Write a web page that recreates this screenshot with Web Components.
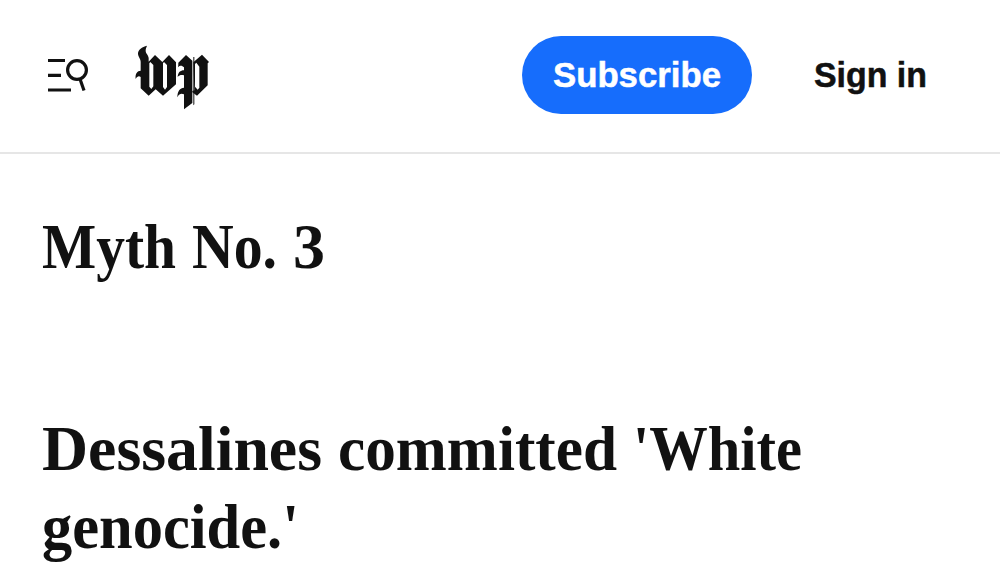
<!DOCTYPE html>
<html lang="en">
<head>
<meta charset="utf-8">
<title>Myth No. 3</title>
<style>
  body {
    margin: 0;
    background: #fff;
    color: #111;
    overflow: hidden;
  }
</style>
</head>
<body>
<site-header></site-header>
<article-body></article-body>

<script>
// Condenses its text to the width given in the attribute
class FitText extends HTMLElement {
  constructor() {
    super();
    this.attachShadow({ mode: "open" });
  }

  connectedCallback() {
    this.shadowRoot.innerHTML = `
      <style>
        :host {
          display: block;
          width: ${this.getAttribute("width")}px;
          white-space: nowrap;
        }

        span {
          display: inline-block;
          transform-origin: 0 50%;
        }
      </style>
      <span><slot></slot></span>`;

    const span = this.shadowRoot.querySelector("span");
    const natural = span.getBoundingClientRect().width;
    span.style.transform = `scaleX(${this.getAttribute("width") / natural})`;
  }
}

class MenuIcon extends HTMLElement {
  constructor() {
    super();
    this.attachShadow({ mode: "open" });
    this.shadowRoot.innerHTML = `
      <style>
        :host { display: block; width: 42px; height: 36px; }
        svg { display: block; }
      </style>
      <svg width="42" height="36" viewBox="0 0 42 36" fill="none" stroke="#111" stroke-width="3.2">
        <path d="M0 3.5H17M0 18.3H13M0 33H23"/>
        <circle cx="29" cy="13" r="9.4"/>
        <path d="M32 22L36 33.5"/>
      </svg>`;
  }
}

class SiteLogo extends HTMLElement {
  constructor() {
    super();
    this.attachShadow({ mode: "open" });
    this.shadowRoot.innerHTML = `
      <style>
        :host { display: block; width: 75px; height: 65px; }
        svg { display: block; }
      </style>
      <svg width="75" height="65" viewBox="15 15 225 195" fill="#111">
        <path fill-rule="evenodd" d="M51 17C36 21 24 29 24 41C24 50 32 55 32 66V92C22 92 15 101 17 117C21 109 27 107 32 111V145L56 167L77 148L99 167L138 133V67L117 45L97 66L75 45L56 65V54C55 44 47 41 47 32C47 26 49 22 51 17ZM58 70L61 66L70 75V139L64 147L58 140ZM99 70L102 66L111 75V141L105 149L99 141Z"/>
        <path d="M168 45L145 68C145 73 145 78 144 82C151 75 156 77 162 82V91C151 91 144 97 143 111C149 104 155 104 162 106V143C150 144 142 153 142 172C148 160 155 160 162 163V208L187 189V62Z"/>
        <path d="M190 51H193V193L190 196Z"/>
        <path fill-rule="evenodd" d="M190 67L216 44L237 66L233 70V136L201 167L187 157V153L193 151ZM195 72V140L203 149L208 143V80L199 68Z"/>
      </svg>`;
  }
}

class PillButton extends HTMLElement {
  constructor() {
    super();
    this.attachShadow({ mode: "open" });
    this.shadowRoot.innerHTML = `
      <style>
        :host { display: block; }

        button {
          display: flex;
          align-items: center;
          justify-content: center;
          width: 230px;
          height: 78px;
          padding: 0;
          border: 0;
          border-radius: 39px;
          background: #166dfc;
          color: #fff;
          font: inherit;
          cursor: pointer;
        }
      </style>
      <button><slot></slot></button>`;
  }
}

class SiteHeader extends HTMLElement {
  constructor() {
    super();
    this.attachShadow({ mode: "open" });
    this.shadowRoot.innerHTML = `
      <style>
        :host {
          display: flex;
          align-items: center;
          box-sizing: border-box;
          height: 154px;
          padding: 0 73px 2px 48px;
          border-bottom: 2px solid #e6e6e6;
          font: bold 35px/40px "Liberation Sans", Arial, sans-serif;
          -webkit-text-stroke: 0.5px;
        }

        site-logo { margin: 4px 0 0 45px; }

        nav {
          display: flex;
          align-items: center;
          gap: 62px;
          margin-left: auto;
        }
      </style>
      <menu-icon></menu-icon>
      <site-logo></site-logo>
      <nav>
        <pill-button><fit-text width="168">Subscribe</fit-text></pill-button>
        <fit-text width="113">Sign in</fit-text>
      </nav>`;
  }
}

class ArticleBody extends HTMLElement {
  constructor() {
    super();
    this.attachShadow({ mode: "open" });
    this.shadowRoot.innerHTML = `
      <style>
        :host {
          display: flex;
          flex-direction: column;
          gap: 124px;
          padding: 54px 42px 0;
          font: bold 64px/78px "Liberation Serif", "Times New Roman", serif;
        }

        h2 { margin: 0; font: inherit; }

        .line { display: flex; gap: 16px; }
      </style>
      <h2 class="line">
        <fit-text width="134">Myth</fit-text>
        <fit-text width="85">No.</fit-text>
        <fit-text width="32">3</fit-text>
      </h2>
      <h2>
        <div class="line">
          <fit-text width="280">Dessalines</fit-text>
          <fit-text width="279">committed</fit-text>
          <fit-text width="169">'White</fit-text>
        </div>
        <div class="line">
          <fit-text width="257">genocide.'</fit-text>
        </div>
      </h2>`;
  }
}

customElements.define("fit-text", FitText);
customElements.define("menu-icon", MenuIcon);
customElements.define("site-logo", SiteLogo);
customElements.define("pill-button", PillButton);
customElements.define("site-header", SiteHeader);
customElements.define("article-body", ArticleBody);
</script>
</body>
</html>
